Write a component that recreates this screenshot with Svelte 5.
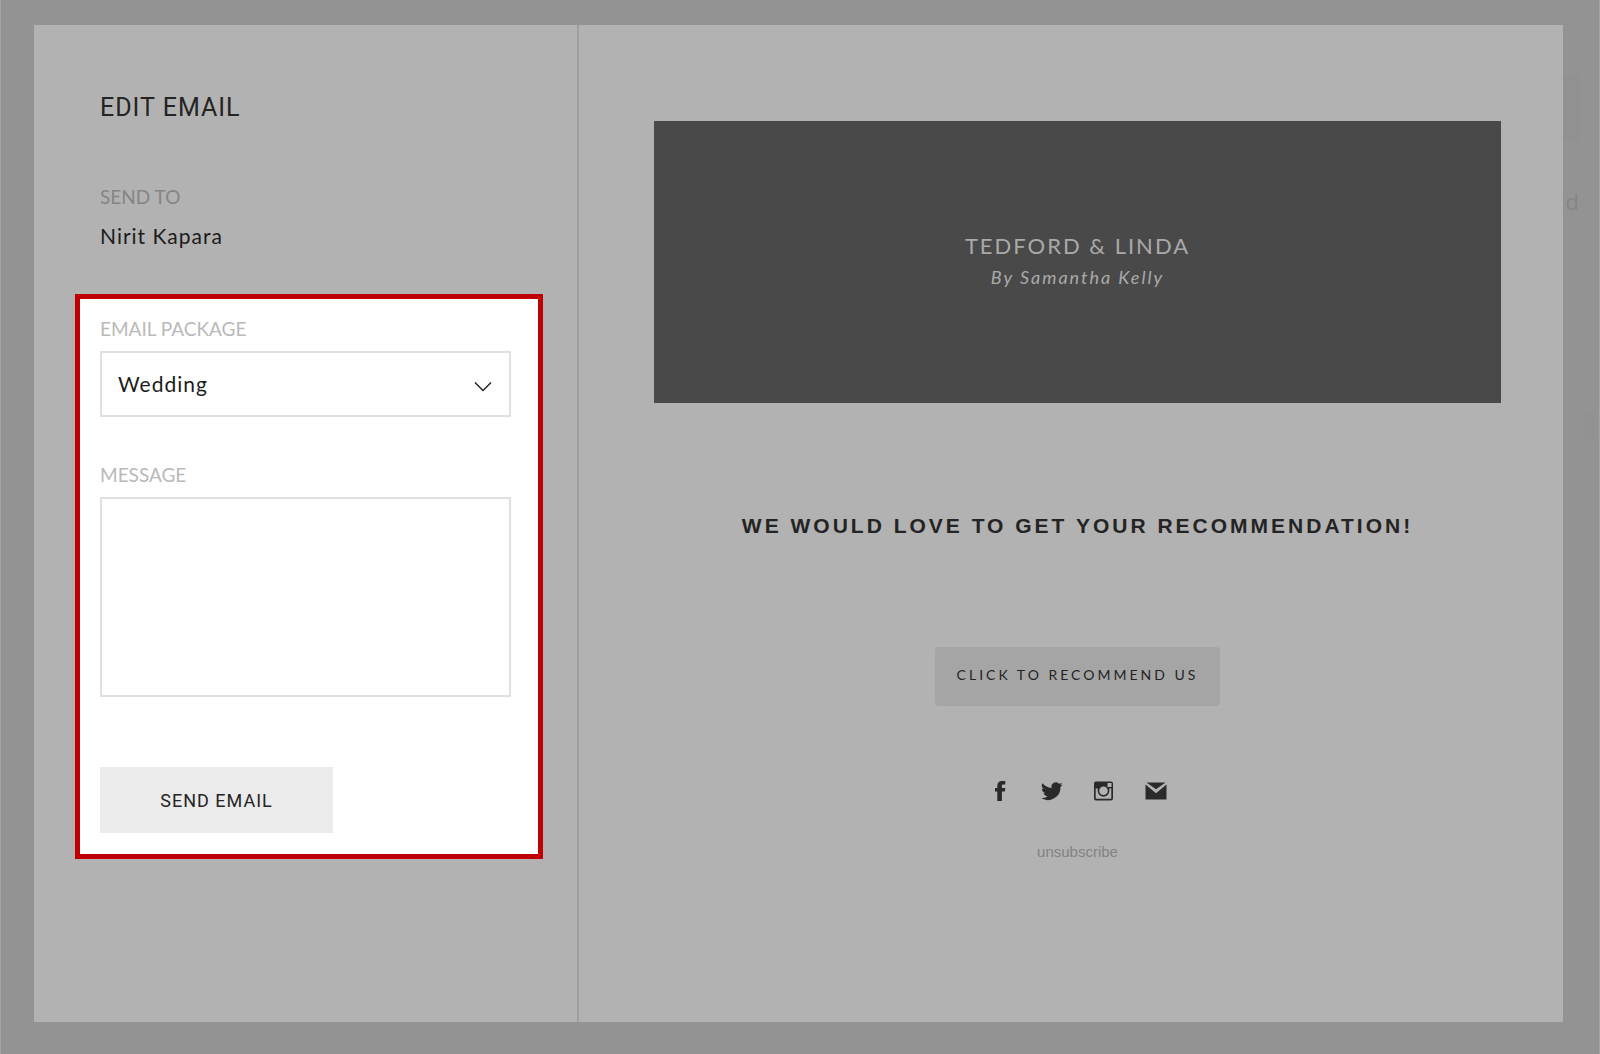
<script>
  let pkg = $state('Wedding');
  let message = $state('');
</script>

<div class="page">
  <span class="behind-block"></span>
  <span class="behind-text">d</span>
  <span class="behind-mark"></span>

  <main class="modal">
    <section class="editor">
      <h1>EDIT EMAIL</h1>
      <div class="recipient">
        <div class="label">SEND TO</div>
        <div class="name">Nirit Kapara</div>
      </div>

      <form class="form" onsubmit={(e) => e.preventDefault()}>
        <label class="label" for="package">EMAIL PACKAGE</label>
        <div class="select">
          <select id="package" bind:value={pkg}>
            <option>Wedding</option>
          </select>
          <svg viewBox="0 0 18 11" aria-hidden="true"><path d="M1 1.5 9 9.5 17 1.5" /></svg>
        </div>
        <label class="label message-label" for="message">MESSAGE</label>
        <textarea id="message" bind:value={message}></textarea>
        <button class="send" type="submit">SEND EMAIL</button>
      </form>
    </section>

    <section class="preview">
      <header class="banner">
        <div class="couple">TEDFORD &amp; LINDA</div>
        <div class="author">By Samantha Kelly</div>
      </header>
      <h2>WE WOULD LOVE TO GET YOUR RECOMMENDATION!</h2>
      <button class="recommend" type="button">CLICK TO RECOMMEND US</button>
      <nav class="social">
        <a href="#facebook" aria-label="Facebook">
          <svg viewBox="0 0 22 22"><path d="M8.300 21v-9.500H6V8h2.300V5.800C8.300 2.700 10 1 13 1H16.300v3.500h-2c-1 0-1.400.4-1.400 1.400V8h3.400l-.4 3.500h-3V21z" /></svg>
        </a>
        <a href="#twitter" aria-label="Twitter">
          <svg viewBox="0 0 24 24"><path d="M23.600 4.900a9.600 9.600 0 0 1-2.800.8 4.800 4.800 0 0 0 2.100-2.700 9.700 9.700 0 0 1-3 1.200 4.800 4.800 0 0 0-8.300 4.400A13.700 13.700 0 0 1 1.700 3.500a4.800 4.800 0 0 0 1.500 6.500 4.800 4.800 0 0 1-2.200-.6 4.800 4.800 0 0 0 3.900 4.800 4.800 4.800 0 0 1-2.200.1 4.800 4.800 0 0 0 4.500 3.400A9.700 9.700 0 0 1 .1 19.700 13.700 13.700 0 0 0 21.200 7.500a9.600 9.600 0 0 0 2.400-2.600z" /></svg>
        </a>
        <a href="#instagram" aria-label="Instagram">
          <svg viewBox="0 0 22 22"><path fill-rule="evenodd" d="M3 1.500h15a2 2 0 0 1 2 2v15a2 2 0 0 1-2 2H3a2 2 0 0 1-2-2v-15a2 2 0 0 1 2-2zM14.500 3v4h4V3zM2.700 8.500v9.800c0 .3.200.5.500.5h14.600c.3 0 .5-.2.500-.5V8.500h-2.200a6 6 0 1 1-11.200 0zM10.500 6.500a4.300 4.300 0 1 0 0 8.600 4.300 4.300 0 0 0 0-8.600z" /></svg>
        </a>
        <a href="#mail" aria-label="Email">
          <svg viewBox="0 0 22 22"><path d="M1.500 2.500h19L11 9.300zM.5 4.500 11 13.300 21.500 4.500v15H.5z" /></svg>
        </a>
      </nav>
      <a class="unsubscribe" href="#unsubscribe">unsubscribe</a>
    </section>
  </main>
</div>

<style>
  :global(body) {
    margin: 0;
  }
  * {
    box-sizing: border-box;
  }
  .page {
    position: relative;
    display: flex;
    min-height: 100vh;
    padding: 25px 36px 32px 33px;
    border: solid #a4a4a4;
    border-width: 0 1px;
    background: #939393;
    color: #242424;
    font-family: Lato, sans-serif;
  }
  .behind-block {
    position: absolute;
    top: 75px;
    right: 19px;
    width: 18px;
    height: 66px;
    background: #919191;
  }
  .behind-text {
    position: absolute;
    top: 184px;
    right: 20px;
    color: #858585;
    font: 22px/34px "Open Sans", sans-serif;
  }
  .behind-mark {
    position: absolute;
    top: 413px;
    right: 4px;
    width: 10px;
    height: 28px;
    background: #919191;
  }
  .modal {
    position: relative;
    flex: 1;
    display: grid;
    grid-template-columns: 545fr 984fr;
    background: #b2b2b2;
  }
  .editor {
    padding: 67px 34px 40px 41px;
    border-right: 2px solid #9f9f9f;
  }
  h1 {
    margin: 0 0 61px 25px;
    font: 400 25px/32px Roboto, sans-serif;
    letter-spacing: 1px;
  }
  .recipient {
    margin: 0 0 40px 25px;
    color: #858585;
  }
  .label {
    display: block;
    font-size: 19px;
    line-height: 24px;
  }
  .name {
    margin-top: 9px;
    color: #1c1c1c;
    font-size: 21px;
    line-height: 36px;
    letter-spacing: 1px;
  }
  .form {
    display: flex;
    flex-direction: column;
    padding: 18px 27px 21px 20px;
    border: 5px solid #c00000;
    background: #fff;
    color: #b9b9b9;
  }
  .select {
    position: relative;
    margin-top: 10px;
  }
  select,
  textarea {
    display: block;
    width: 100%;
    margin: 0;
    border: 2px solid #e0e0e0;
    border-radius: 0;
    background: #fff;
    color: #1c1c1c;
    font: 21px/28px Lato, sans-serif;
    letter-spacing: 1px;
  }
  select {
    height: 66px;
    padding: 0 50px 0 16px;
    appearance: none;
  }
  .select svg {
    position: absolute;
    top: 30px;
    right: 19px;
    width: 18px;
    height: 11px;
    fill: none;
    stroke: #222;
    stroke-width: 1.4;
    pointer-events: none;
  }
  .message-label {
    margin-top: 46px;
  }
  textarea {
    height: 200px;
    margin-top: 10px;
    padding: 12px 16px;
    resize: none;
  }
  .send {
    align-self: flex-start;
    width: 233px;
    height: 66px;
    margin-top: 70px;
    padding: 2px 0 0;
    border: 0;
    background: #ebebeb;
    color: #242424;
    font: 18px/28px Roboto, sans-serif;
    letter-spacing: 1px;
  }
  .preview {
    display: flex;
    flex-direction: column;
    align-items: center;
    padding: 96px 62px 40px 75px;
  }
  .banner {
    align-self: stretch;
    height: 282px;
    padding-top: 108px;
    background: #494949;
    color: #a9a9a9;
    text-align: center;
  }
  .couple {
    font-size: 22px;
    line-height: 34px;
    letter-spacing: 2px;
  }
  .author {
    font-size: 18px;
    font-style: italic;
    line-height: 28px;
    letter-spacing: 2px;
  }
  h2 {
    margin: 109px 0 107px;
    font: bold 21px/28px "Liberation Sans", Arial, sans-serif;
    letter-spacing: 3px;
  }
  .recommend {
    width: 285px;
    height: 59px;
    padding: 0 0 4px;
    border: 0;
    border-radius: 4px;
    background: #a5a5a5;
    color: #242424;
    font: 14px/20px Lato, sans-serif;
    letter-spacing: 3px;
  }
  .social {
    display: flex;
    gap: 30px;
    margin-top: 74px;
  }
  .social a,
  .social svg {
    display: block;
    width: 22px;
    height: 22px;
    fill: #2a2a2a;
  }
  .unsubscribe {
    margin-top: 40px;
    color: #828282;
    font: 15px/20px "Liberation Sans", Arial, sans-serif;
    text-decoration: none;
  }
</style>
